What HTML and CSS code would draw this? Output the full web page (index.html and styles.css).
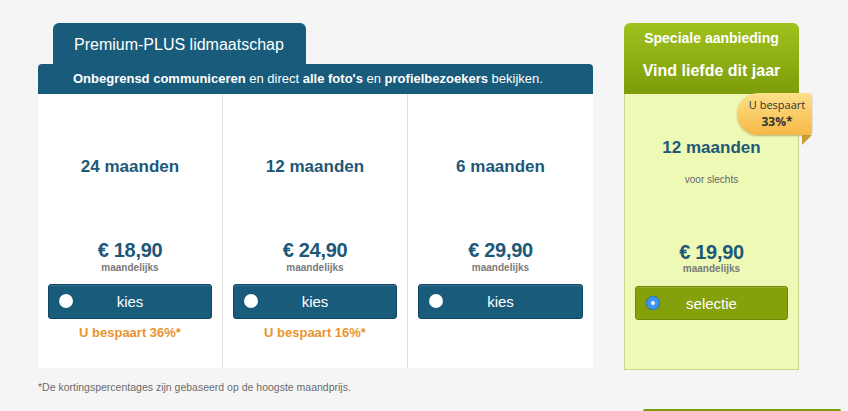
FILE: index.html
```html
<!DOCTYPE html>
<html lang="nl">
<head>
    <meta charset="UTF-8">
    <title>Premium-PLUS lidmaatschap</title>
    <link rel="stylesheet" href="styles.css">
</head>
<body>
    <div class="page">
        <div class="plans">
            <div class="tab">Premium-PLUS lidmaatschap</div>
            <div class="plans-bar">
                <b>Onbegrensd communiceren</b> en direct <b>alle foto's</b> en <b>profielbezoekers</b> bekijken.
            </div>
            <div class="plans-grid">
                <div class="plan">
                    <div class="plan-title">24 maanden</div>
                    <div class="plan-price">€ 18,90</div>
                    <div class="plan-per">maandelijks</div>
                    <button class="btn"><span class="radio"></span>kies</button>
                    <div class="plan-save">U bespaart 36%*</div>
                </div>
                <div class="plan">
                    <div class="plan-title">12 maanden</div>
                    <div class="plan-price">€ 24,90</div>
                    <div class="plan-per">maandelijks</div>
                    <button class="btn"><span class="radio"></span>kies</button>
                    <div class="plan-save">U bespaart 16%*</div>
                </div>
                <div class="plan">
                    <div class="plan-title">6 maanden</div>
                    <div class="plan-price">€ 29,90</div>
                    <div class="plan-per">maandelijks</div>
                    <button class="btn"><span class="radio"></span>kies</button>
                </div>
            </div>
            <p class="note">*De kortingspercentages zijn gebaseerd op de hoogste maandprijs.</p>
        </div>

        <div class="special">
            <div class="special-head">
                <div class="special-label">Speciale aanbieding</div>
                <div class="special-title">Vind liefde dit jaar</div>
            </div>
            <div class="special-body">
                <div class="badge">
                    <span>U bespaart</span>
                    <b>33%*</b>
                </div>
                <div class="plan-title">12 maanden</div>
                <div class="special-sub">voor slechts</div>
                <div class="plan-price">€ 19,90</div>
                <div class="plan-per">maandelijks</div>
                <button class="btn btn-green"><span class="radio radio-on"></span>selectie</button>
            </div>
            <div class="next-btn"></div>
        </div>
    </div>
</body>
</html>
```

FILE: styles.css
```css
* {
    margin: 0;
    padding: 0;
    box-sizing: border-box;
}

body {
    background: #f5f5f5;
    font-family: "Liberation Sans", Arial, Helvetica, sans-serif;
    height: 411px;
    overflow: hidden;
}

.page {
    display: flex;
    padding: 23px 0 0 38px;
}

.plans {
    width: 555px;
}

.tab {
    margin-left: 15px;
    width: 253px;
    height: 41px;
    background: #195b7b;
    border-radius: 6px 6px 0 0;
    color: #fff;
    font-size: 16px;
    line-height: 43px;
    padding-left: 21px;
}

.plans-bar {
    height: 30px;
    background: #195b7b;
    border-radius: 4px 4px 0 0;
    color: #fff;
    font-size: 13px;
    line-height: 30px;
    padding-left: 35px;
}

.plans-grid {
    display: grid;
    grid-template-columns: 184px 185px 186px;
    height: 274px;
    background: #fff;
}

.plan {
    display: flex;
    flex-direction: column;
    align-items: center;
    padding: 62px 10px 0 10px;
    border-left: 1px solid #dedede;
}

.plan:first-child {
    border-left: none;
}

.plan-title {
    color: #1d5878;
    font-size: 17px;
    font-weight: bold;
    line-height: 21px;
}

.plan-price {
    margin-top: 62px;
    color: #1d5878;
    font-size: 20px;
    font-weight: bold;
    line-height: 23px;
    letter-spacing: -0.3px;
}

.plan-per {
    margin-top: 0;
    color: #7a7a7a;
    font-size: 10px;
    font-weight: bold;
    line-height: 12px;
}

.btn {
    position: relative;
    margin-top: 10px;
    width: 100%;
    height: 35px;
    background: #195b7b;
    border: 1px solid #0f4560;
    border-radius: 3px;
    color: #fff;
    font-family: inherit;
    font-size: 15px;
    text-align: center;
    box-shadow: inset 0 1px 0 rgba(255, 255, 255, 0.15);
}

.radio {
    position: absolute;
    left: 10px;
    top: 9px;
    width: 14px;
    height: 14px;
    border-radius: 50%;
    background: #fff;
    box-shadow: 0 0 1px rgba(0, 0, 0, 0.4);
}

.radio-on {
    background: #3d96f0;
    border: 1px solid #2a7ed8;
}

.radio-on::after {
    content: "";
    position: absolute;
    left: 4px;
    top: 4px;
    width: 4px;
    height: 4px;
    border-radius: 50%;
    background: #fff;
}

.plan-save {
    margin-top: 6px;
    color: #e8952c;
    font-size: 13px;
    font-weight: bold;
    line-height: 16px;
}

.note {
    margin-top: 13px;
    color: #6b6b6b;
    font-size: 10.5px;
}

.special {
    margin-left: 31px;
    width: 175px;
    position: relative;
}

.special-head {
    height: 71px;
    background: linear-gradient(#9fc21d, #7d9c0b);
    border-radius: 6px 6px 0 0;
    color: #fff;
    text-align: center;
    font-weight: bold;
    padding-top: 7px;
}

.special-label {
    font-size: 14px;
    line-height: 16px;
}

.special-title {
    margin-top: 15px;
    font-size: 16px;
    line-height: 20px;
}

.special-body {
    position: relative;
    height: 276px;
    background: #eef9b6;
    border: 1px solid #c8d68c;
    border-top: none;
    display: flex;
    flex-direction: column;
    align-items: center;
    padding: 43px 10px 0 10px;
}

.special-sub {
    margin-top: 16px;
    color: #666;
    font-size: 10px;
    line-height: 12px;
}

.special-body .plan-price {
    margin-top: 55px;
}

.special-body .plan-per {
    margin-top: -1px;
}

.btn-green {
    margin-top: 11px;
    background: #84a10c;
    border-color: #6e8a05;
    height: 34px;
}

.badge {
    position: absolute;
    top: -1px;
    left: 112px;
    width: 75px;
    height: 42px;
    background: linear-gradient(#fde089, #f6b846);
    border-radius: 22px 4px 4px 22px;
    box-shadow: 0 1px 2px rgba(0, 0, 0, 0.25);
    font-family: "Open Sans", "Liberation Sans", sans-serif;
    color: #333;
    text-align: center;
    padding: 3px 0 0 5px;
    line-height: 17px;
}

.badge span {
    display: block;
    font-size: 11px;
}

.badge b {
    display: block;
    font-size: 12px;
}

.badge::after {
    content: "";
    position: absolute;
    right: 0;
    top: 42px;
    border-top: 10px solid #c99a2e;
    border-right: 10px solid transparent;
}

.next-btn {
    position: absolute;
    left: 19px;
    top: 386px;
    width: 198px;
    height: 10px;
    background: #7d9a0c;
    border-radius: 2px 2px 0 0;
}
```
